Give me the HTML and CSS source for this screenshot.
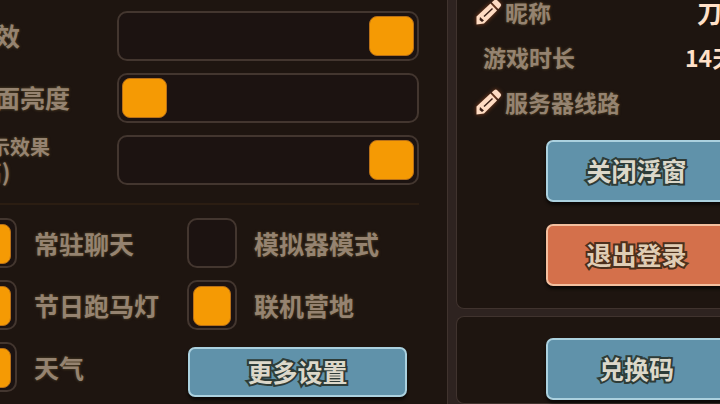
FILE: index.html
```html
<!DOCTYPE html>
<html lang="zh-CN">
<head>
  <meta charset="UTF-8">
  <title>更多设置</title>
  <link rel="stylesheet" href="styles.css">
</head>
<body>
  <main class="screen">
    <section class="panel settings">
      <div class="sliders">
        <label class="name" for="sound">音效</label>
        <input class="slider" id="sound" type="range" min="0" max="100" value="100">
        <label class="name" for="brightness">画面亮度</label>
        <input class="slider" id="brightness" type="range" min="0" max="100" value="0">
        <label class="name name-small" for="effects">显示效果<span class="level">(高)</span></label>
        <input class="slider" id="effects" type="range" min="0" max="100" value="100">
      </div>
      <div class="toggles">
        <label class="toggle"><input type="checkbox" checked>常驻聊天</label>
        <label class="toggle"><input type="checkbox">模拟器模式</label>
        <label class="toggle"><input type="checkbox" checked>节日跑马灯</label>
        <label class="toggle"><input type="checkbox" checked>联机营地</label>
        <label class="toggle"><input type="checkbox" checked>天气</label>
        <button class="btn btn-more" type="button">更多设置</button>
      </div>
    </section>

    <div class="side">
      <section class="panel account">
        <dl class="info">
          <div class="row">
            <dt>
              <svg class="pencil" viewBox="0 0 26 26"><use href="#pencil"/></svg>昵称
            </dt>
            <dd class="value">刀</dd>
          </div>
          <div class="row">
            <dt class="plain">游戏时长</dt>
            <dd class="value value-time">14天</dd>
          </div>
          <div class="row">
            <dt>
              <svg class="pencil" viewBox="0 0 26 26"><use href="#pencil"/></svg>服务器线路
            </dt>
          </div>
        </dl>
        <button class="btn" type="button">关闭浮窗</button>
        <button class="btn btn-danger" type="button">退出登录</button>
      </section>
      <section class="panel redeem">
        <button class="btn" type="button">兑换码</button>
      </section>
    </div>
  </main>

  <svg class="defs" width="0" height="0">
    <symbol id="pencil" viewBox="0 0 26 26">
      <path fill="#ffdcc3" d="M0.500 25.500V17.500L14.500 4.500L21 11.500L8 24.500Z"/>
      <path fill="#ffdcc3" d="M15.800 3.200L18.500 1Q20 0 21.500 1.500L24.500 4.500Q26 6 24.500 7.500L22.300 10Z"/>
      <path stroke="#3a2017" stroke-width="1.500" fill="none" d="M8 17.500L16.500 9.500"/>
      <path fill="#3a2017" d="M4 18L8 21.500L6 23L3.500 21Z"/>
    </symbol>
  </svg>
</body>
</html>
```
FILE: styles.css
```css
* {
  box-sizing: border-box;
}
body {
  margin: 0;
  min-height: 100vh;
  overflow: hidden;
  background: #2e2320;
  color: #958370;
  font-family: "Noto Sans CJK SC", sans-serif;
  font-size: 25px;
  font-weight: 700;
}
/* the menu is wider than the window and runs off both sides */
.screen {
  display: flex;
  gap: 8px;
  min-height: 100vh;
  margin: 0 -96px 0 -33px;
}
.panel {
  background: #1e1510;
  border: 1px solid #40332e;
}
.settings {
  flex: 1;
  padding: 11px 28px 0 0;
  border-width: 0 1px 0 0;
}
.sliders {
  display: grid;
  grid-template-columns: 1fr 302px;
  row-gap: 12px;
  align-items: center;
  padding-bottom: 18px;
  border-bottom: 2px solid #2b1d12;
}
.name {
  padding: 0 0 2px 3px;
  line-height: 24px;
  text-shadow: 0 0 3px #5a4a2c;
}
.name-small {
  font-size: 20px;
}
.level {
  display: block;
  font-size: 23px;
}
.slider {
  appearance: none;
  width: 302px;
  height: 50px;
  margin: 0;
  padding: 0 3px;
  background: #1c1311;
  border: 2px solid #43362f;
  border-radius: 10px;
}
.slider::-webkit-slider-thumb {
  appearance: none;
  width: 45px;
  height: 40px;
  background: #f59a04;
  border: 1px solid #b87018;
  border-radius: 8px;
}
.toggles {
  display: grid;
  grid-template-columns: 220px 1fr;
  row-gap: 12px;
  align-items: start;
  padding-top: 13px;
}
.toggle {
  display: flex;
  align-items: center;
  gap: 17px;
  white-space: nowrap;
  text-shadow: 0 0 3px #5a4a2c;
}
.toggle input {
  appearance: none;
  width: 50px;
  height: 50px;
  margin: 0;
  padding: 4px;
  background: #1c1311;
  border: 2px solid #43362f;
  border-radius: 10px;
}
.toggle input:checked::before {
  content: "";
  display: block;
  height: 38px;
  background: #f59a04;
  border: 1px solid #b87018;
  border-radius: 8px;
}
.btn {
  display: block;
  width: 182px;
  height: 62px;
  padding: 0 0 2px;
  background: #6092aa;
  border: 2px solid #abd1df;
  border-radius: 7px;
  box-shadow: 0 3px 3px #0c0907;
  color: #dcd8ca;
  font: inherit;
  paint-order: stroke fill;
  -webkit-text-stroke: 4px #2e3c38;
}
.btn-danger {
  background: #d4704b;
  border-color: #f3bf9f;
  color: #e0cdb4;
  -webkit-text-stroke-color: #4c301c;
}
.btn-more {
  width: 219px;
  height: 50px;
  margin: 5px 0 0 1px;
}
.side {
  display: flex;
  flex-direction: column;
  gap: 7px;
  width: 360px;
}
.side .panel {
  display: flex;
  flex-direction: column;
  align-items: center;
  gap: 22px;
  border-width: 1px 0 1px 1px;
  border-radius: 8px;
}
.side .account {
  border-top: 0;
  border-top-left-radius: 0;
  padding-bottom: 22px;
}
.side .redeem {
  flex: 1;
  padding-top: 21px;
}
.info {
  width: 100%;
  margin: -11px 0 -6px;
  padding: 0 0 0 19px;
  font-size: 23px;
}
.row {
  display: flex;
  justify-content: space-between;
  align-items: center;
  height: 45px;
}
.row dt {
  display: flex;
  align-items: center;
  gap: 3px;
  text-shadow: 0 0 3px #5a4a2c;
}
.row .plain {
  padding-left: 7px;
}
.value {
  width: 119px;
  margin: 0;
  color: #ffe0c8;
  font-size: 25px;
}
.value-time {
  width: 131px;
  font-size: 23px;
}
.pencil {
  width: 26px;
  height: 26px;
  filter: drop-shadow(0 0 2px #8a4523);
}
.defs {
  position: absolute;
}
```
